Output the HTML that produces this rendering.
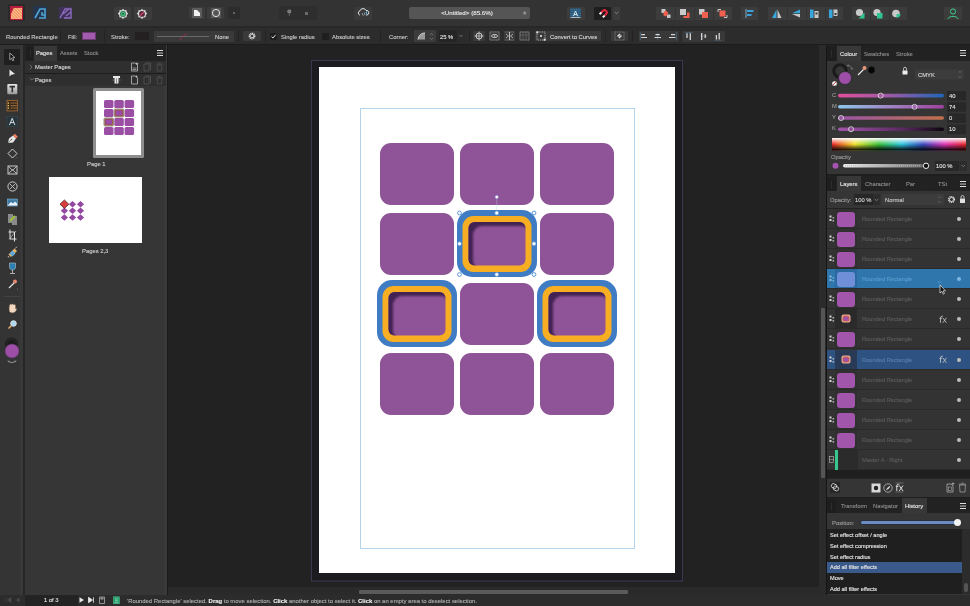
<!DOCTYPE html>
<html><head><meta charset="utf-8">
<style>
*{box-sizing:border-box;margin:0;padding:0}
html,body{width:970px;height:606px;overflow:hidden;background:#202020;font-family:"Liberation Sans",sans-serif;color:#ddd;-webkit-font-smoothing:antialiased}
div,span,svg{position:absolute}
.t{font-size:6px;white-space:nowrap;color:#cfcfcf;line-height:8px;will-change:transform;-webkit-text-stroke:0.12px currentColor}
.btn{background:#3a3a3a;border-radius:1px}
.sep{width:1px;background:#232323}
</style></head><body>
<!-- TOP TOOLBAR -->
<div style="left:0;top:0;width:970px;height:26px;background:#333333"></div>
<div style="left:0;top:26px;width:970px;height:2px;background:#282828"></div>
<!-- TOPITEMS -->
<div style="left:8px;top:4px;width:17px;height:17px;background:#2a2a2a"></div>
<svg style="left:10px;top:5.5px" width="13" height="14" viewBox="0 0 13 14"><defs><clipPath id="pubc"><path d="M3.8 2 H12 V13 H1 V8.3 Z"/></clipPath></defs><rect width="13" height="14" fill="#b81c3c"/><path d="M3.8 2 H12 V13 H1 V8.3 Z" fill="#ef7a45"/><g clip-path="url(#pubc)" stroke="#ffc090" stroke-width="1.4"><path d="M-12 0 L2 14 M-9 0 L5 14 M-6 0 L8 14 M-3 0 L11 14 M0 0 L14 14 M3 0 L17 14 M6 0 L20 14 M9 0 L23 14"/></g></svg>
<svg style="left:33px;top:6px" width="14" height="13" viewBox="0 0 14 13"><rect width="14" height="13" fill="#24354d"/><path d="M2 12 L7 3 H12 V12 H6 M9 6 v3 h3" fill="none" stroke="#4fa6d4" stroke-width="1.6"/></svg>
<svg style="left:59px;top:7px" width="13" height="12" viewBox="0 0 13 12"><rect width="13" height="12" fill="#3f3159"/><path d="M1 11 L6 2 H12 V11 H5 M4 7 L9 3 M7 9 L12 5" fill="none" stroke="#8e6dbf" stroke-width="1.3"/></svg>
<div class="btn" style="left:114px;top:7px;width:17px;height:13px;background:#3c3c3c"></div>
<div class="btn" style="left:134px;top:7px;width:18px;height:13px;background:#3c3c3c"></div>
<svg style="left:117px;top:8px" width="12" height="12" viewBox="0 0 12 12"><path d="M6 0.8 L7.3 2.2 L9.4 1.9 L9.7 4 L11.2 5.5 L9.8 7 L9.6 9.2 L7.5 9.4 L6 10.9 L4.5 9.4 L2.4 9.2 L2.2 7 L0.8 5.5 L2.3 4 L2.6 1.9 L4.7 2.2 Z" fill="#d9d9d9"/><circle cx="6" cy="5.9" r="2.9" fill="#1e6a40"/><circle cx="6" cy="5.9" r="2.2" fill="#4cc080"/><path d="M4.6 5.3 L7.4 5.3 L6 7.1Z" fill="#0d4d2a"/></svg>
<svg style="left:136px;top:8px" width="12" height="12" viewBox="0 0 12 12"><path d="M6 0.8 L7.3 2.2 L9.4 1.9 L9.7 4 L11.2 5.5 L9.8 7 L9.6 9.2 L7.5 9.4 L6 10.9 L4.5 9.4 L2.4 9.2 L2.2 7 L0.8 5.5 L2.3 4 L2.6 1.9 L4.7 2.2 Z" fill="#d9d9d9"/><circle cx="6" cy="5.9" r="2.9" fill="#4a2a3a"/><path d="M4.2 7.6 L7.8 4.2" stroke="#d8406a" stroke-width="1.4"/></svg>
<div class="btn" style="left:189px;top:7px;width:16px;height:12px;background:#3c3c3c"></div>
<div style="left:192px;top:8px;width:10px;height:10px;background:#5c5c5c"></div>
<svg style="left:193px;top:9px" width="8" height="8" viewBox="0 0 8 8"><path d="M1 1 H4 L7 4 V7 H1 Z" fill="#f2f2f2"/></svg>
<div class="btn" style="left:207px;top:7px;width:17px;height:12px;background:#3c3c3c"></div>
<div style="left:211px;top:8px;width:10px;height:10px;background:#555"></div>
<svg style="left:211px;top:8px" width="10" height="10" viewBox="0 0 10 10"><circle cx="5" cy="5" r="3.6" fill="none" stroke="#e6e6e6" stroke-width="1"/></svg>
<div class="btn" style="left:228px;top:7px;width:12px;height:12px;background:#2c2c2c"></div>
<div style="left:233px;top:12px;width:2px;height:2px;background:#666"></div>
<div class="btn" style="left:279px;top:6px;width:38px;height:14px;background:#2e2e2e"></div>
<svg style="left:286px;top:8px" width="7" height="9" viewBox="0 0 7 9"><circle cx="3.3" cy="3.5" r="2" fill="#8a8a8a"/><circle cx="3.3" cy="3.5" r="1" fill="#6a6a6a"/><path d="M3.3 5.5 V8" stroke="#7a7a7a" stroke-width="0.7"/></svg>
<div style="left:305px;top:12px;width:3px;height:3px;background:#6a6a6a"></div>
<div class="btn" style="left:354px;top:7px;width:18px;height:13px;background:#3a3a3a"></div>
<svg style="left:357px;top:8px" width="13" height="9" viewBox="0 0 13 9"><path d="M3 7 H2.8 A2.2 2.2 0 0 1 3 2.8 A3.2 3.2 0 0 1 9 2.5 A2.3 2.3 0 0 1 10 7 H9" fill="none" stroke="#dfe6ea" stroke-width="1"/><path d="M5 5 L6.3 7.8 M7.5 4.5 L7.8 7" stroke="#cfd8dc" stroke-width="0.6"/><path d="M9.5 3.5 V6.5" stroke="#5aa6d6" stroke-width="1.2"/></svg>
<div style="left:409px;top:7px;width:121px;height:12px;background:#555555;border-radius:2px"></div>
<div class="t" style="left:409px;top:8.5px;width:116px;text-align:center;color:#e8e8e8;font-size:6.2px">&lt;Untitled&gt; (85.6%)</div>
<div class="t" style="left:522px;top:8.5px;color:#9a9a9a;font-size:6px;-webkit-text-stroke:0">★</div>
<div class="btn" style="left:567px;top:7px;width:18px;height:13px;background:#3c3c3c"></div>
<svg style="left:570px;top:8px" width="11" height="11" viewBox="0 0 11 11"><rect x="0" y="0.5" width="11" height="9" fill="#26506f"/><path d="M0.5 1.2 H10.5 M0.5 3.2 H10.5 M0.5 5.5 H10.5 M0.5 7.6 H10.5" stroke="#5fa8d8" stroke-width="0.6" stroke-dasharray="1.2 0.6"/><path d="M3.3 8.3 L5.5 3 L7.7 8.3 M4.1 6.5 H6.9" fill="none" stroke="#cfe3ea" stroke-width="1"/><path d="M0.5 9.5 H10.5" stroke="#e8f0f4" stroke-width="0.7"/></svg>
<div class="btn" style="left:594px;top:7px;width:17px;height:13px;background:#1e1e1e"></div>
<svg style="left:597px;top:8px" width="11" height="11" viewBox="0 0 11 11"><path d="M3.6 5.2 L6.2 2.6 A2.3 2.3 0 0 1 9.4 5.8 L6.8 8.4" fill="none" stroke="#e02a40" stroke-width="2"/><path d="M2.6 6.2 L4.4 4.4 M5.8 9.4 L7.6 7.6" stroke="#f2f2f2" stroke-width="2"/></svg>
<div class="btn" style="left:613px;top:7px;width:7px;height:13px;background:#3c3c3c"></div>
<svg style="left:614px;top:11px" width="5" height="4" viewBox="0 0 5 4"><path d="M0.7 0.8 L2.5 2.8 L4.3 0.8" fill="none" stroke="#aaa" stroke-width="0.6"/></svg>
<div style="left:656px;top:7px;width:76px;height:13px;background:#3c3c3c"></div>
<div style="left:675px;top:7px;width:1px;height:13px;background:#333333"></div>
<div style="left:694px;top:7px;width:1px;height:13px;background:#333333"></div>
<div style="left:713px;top:7px;width:1px;height:13px;background:#333333"></div>
<svg style="left:656px;top:7px" width="76" height="13" viewBox="0 0 76 13">
<rect x="5.5" y="2" width="4" height="4" fill="#c9c9c9"/><rect x="11" y="7.5" width="3.5" height="3.5" fill="#c9c9c9"/><path d="M7.5 5 L10 3.5 L12.5 6 L10 9.5 L7.5 8.5 Z" fill="#f0604e"/>
<rect x="24" y="2" width="6" height="6" fill="#c9c9c9"/><path d="M31 5.5 H33.5 V11 H27.5 V9 H31 Z" fill="#f0604e"/>
<rect x="43" y="2" width="5.5" height="5.5" fill="#c9c9c9"/><rect x="46" y="5" width="6" height="6" fill="#f0604e"/>
<rect x="63.5" y="3.5" width="6" height="6" fill="#f0604e"/><path d="M62 5 V2.5 H65" fill="none" stroke="#c9c9c9" stroke-width="1"/><path d="M71 8 V10.5 H68" fill="none" stroke="#c9c9c9" stroke-width="1"/>
</svg>
<div style="left:741px;top:7px;width:17px;height:13px;background:#3c3c3c"></div>
<svg style="left:741px;top:7px" width="17" height="13" viewBox="0 0 17 13"><path d="M5 2 V11" stroke="#8ab4cf" stroke-width="0.9"/><rect x="6" y="3" width="6.5" height="2" fill="#3aa0d8"/><rect x="6" y="7" width="4.5" height="2" fill="#3aa0d8"/></svg>
<div style="left:768px;top:7px;width:75px;height:13px;background:#3c3c3c"></div>
<div style="left:787px;top:7px;width:1px;height:13px;background:#333333"></div>
<div style="left:806px;top:7px;width:1px;height:13px;background:#333333"></div>
<div style="left:825px;top:7px;width:1px;height:13px;background:#333333"></div>
<svg style="left:768px;top:7px" width="75" height="13" viewBox="0 0 75 13">
<path d="M8.5 2.5 V11 H4 Z" fill="#37a6dc"/><path d="M9.5 2.5 V11 H13.5 Z" fill="#c9c9c9"/>
<path d="M24 6.2 L32 2.6 V6.2 Z" fill="#37a6dc"/><path d="M24 6.9 L32 10.6 V6.9 Z" fill="#c9c9c9"/>
<rect x="42" y="2.5" width="3.5" height="8.5" fill="#37a6dc"/><path d="M46.5 4 H50.5 V11 H46.5 Z" fill="#c9c9c9"/><rect x="47.5" y="5.5" width="2" height="2" fill="#383838"/>
<rect x="61" y="2.5" width="3.5" height="8.5" fill="#37a6dc"/><path d="M65.5 2.5 H69.5 V9 H65.5 Z" fill="#c9c9c9"/><rect x="66.5" y="6" width="2" height="2" fill="#383838"/>
</svg>
<div style="left:852px;top:7px;width:55px;height:13px;background:#3c3c3c"></div>
<div style="left:870px;top:7px;width:1px;height:13px;background:#333333"></div>
<div style="left:889px;top:7px;width:1px;height:13px;background:#333333"></div>
<svg style="left:852px;top:7px" width="55" height="13" viewBox="0 0 55 13">
<circle cx="7.5" cy="5.5" r="3.6" fill="#c9c9c9"/><path d="M12.5 5.5 V11.5 H6.5 Z" fill="#31c48d"/>
<circle cx="25" cy="5.5" r="3.6" fill="#c9c9c9"/><rect x="25" y="6" width="5.5" height="5.5" fill="#31c48d"/>
<circle cx="44" cy="6.5" r="3.8" fill="#c9c9c9"/><path d="M44.5 7 H48.5 A4 4 0 0 1 44.5 10.8 Z" fill="#31c48d"/>
</svg>
<div style="left:944px;top:7px;width:18px;height:13px;background:#3c3c3c"></div>
<svg style="left:944px;top:7px" width="18" height="13" viewBox="0 0 18 13"><circle cx="9" cy="4.5" r="2.6" fill="none" stroke="#3ccf8e" stroke-width="1"/><path d="M4 12 C4.5 8.5 13.5 8.5 14 12" fill="none" stroke="#3ccf8e" stroke-width="1"/></svg>
<!-- /TOPITEMS -->

<!-- CONTEXT BAR -->
<div id="ctx" style="left:0;top:28px;width:970px;height:16px;background:#2c2c2c"></div>
<div style="left:0;top:44px;width:970px;height:1px;background:#1c1c1c"></div>
<!-- CTXITEMS -->
<div class="t" style="left:6px;top:33px;color:#c8c8c8;font-size:5.85px">Rounded Rectangle</div>
<div class="sep" style="left:60px;top:30px;height:12px"></div>
<div class="t" style="left:68px;top:33px;color:#c8c8c8;font-size:5.85px">Fill:</div>
<div style="left:82px;top:32px;width:14px;height:8px;background:#a35bb0;border:0.5px solid #6a3a70"></div>
<div class="sep" style="left:104px;top:30px;height:12px"></div>
<div class="t" style="left:111px;top:33px;color:#c8c8c8;font-size:5.85px">Stroke:</div>
<div style="left:135px;top:32px;width:14px;height:8px;background:#242022"></div>
<div style="left:154px;top:31px;width:80px;height:11px;background:#3a3a3a;border-radius:1px"></div>
<div style="left:157px;top:36px;width:52px;height:1px;background:#6a6a6a"></div>
<svg style="left:176px;top:31px" width="14" height="11" viewBox="0 0 14 11"><path d="M3.5 9 L10.5 2" stroke="#a8304a" stroke-width="0.8"/></svg>
<div class="t" style="left:215px;top:33px;color:#d0d0d0;font-size:5.85px">None</div>
<div class="sep" style="left:238px;top:30px;height:12px"></div>
<div style="left:243px;top:31px;width:18px;height:10px;background:#3a3a3a;border-radius:1px"></div>
<svg style="left:248px;top:32px" width="8" height="8" viewBox="0 0 8 8"><circle cx="4" cy="4" r="2.6" fill="none" stroke="#d8d8d8" stroke-width="1.6" stroke-dasharray="1.1 0.6"/><circle cx="4" cy="4" r="1.8" fill="none" stroke="#d8d8d8" stroke-width="0.8"/></svg>
<div class="sep" style="left:265px;top:30px;height:12px"></div>
<div style="left:270px;top:33px;width:7px;height:7px;background:#1e1e1e;border-radius:1px"></div>
<svg style="left:270px;top:33px" width="7" height="7" viewBox="0 0 7 7"><path d="M1.5 3.6 L3 5 L5.6 1.8" fill="none" stroke="#eee" stroke-width="0.9"/></svg>
<div class="t" style="left:281px;top:33px;color:#c8c8c8;font-size:5.85px">Single radius</div>
<div style="left:322px;top:33px;width:7px;height:7px;background:#1e1e1e;border-radius:1px"></div>
<div class="t" style="left:332px;top:33px;color:#c8c8c8;font-size:5.85px">Absolute sizes</div>
<div class="sep" style="left:380px;top:30px;height:12px"></div>
<div class="t" style="left:389px;top:33px;color:#c8c8c8;font-size:5.85px">Corner:</div>
<div style="left:414px;top:30px;width:22px;height:12px;background:#3c3c3c;border-radius:1px"></div>
<svg style="left:417px;top:32px" width="10" height="8" viewBox="0 0 10 8"><path d="M1 7.5 C1.5 3.5 4 1 8 1 V7.5 Z" fill="#9a9a9a"/><path d="M1 7.5 C1.5 3.5 4 1 8 1" fill="none" stroke="#dcdcdc" stroke-width="0.9"/></svg>
<svg style="left:429px;top:32px" width="5" height="9" viewBox="0 0 5 9"><path d="M1 3 L2.5 1.5 L4 3 M1 6 L2.5 7.5 L4 6" fill="none" stroke="#8a8a8a" stroke-width="0.6"/></svg>
<div style="left:439px;top:30px;width:18px;height:12px;background:#252525"></div>
<div class="t" style="left:440px;top:33px;color:#e0e0e0;font-size:5.85px">25 %</div>
<div style="left:457px;top:30px;width:7px;height:12px;background:#2b2b2b"></div>
<svg style="left:459px;top:34px" width="4" height="4" viewBox="0 0 4 4"><path d="M0.5 1 L2 2.8 L3.5 1" fill="none" stroke="#999" stroke-width="0.6"/></svg>
<div class="sep" style="left:469px;top:30px;height:12px"></div>
<div style="left:473px;top:31px;width:12px;height:10px;background:#3a3a3a;border-radius:1px"></div>
<svg style="left:474px;top:31px" width="10" height="10" viewBox="0 0 10 10"><circle cx="5" cy="5" r="3" fill="none" stroke="#ddd" stroke-width="0.9"/><path d="M5 0.5 V9.5 M0.5 5 H9.5" stroke="#ddd" stroke-width="0.7"/></svg>
<div style="left:489px;top:31px;width:11px;height:10px;background:#3a3a3a;border-radius:1px"></div>
<svg style="left:489px;top:31px" width="11" height="10" viewBox="0 0 11 10"><rect x="1" y="1" width="9" height="8" fill="none" stroke="#bbb" stroke-width="0.6" stroke-dasharray="1 0.6"/><ellipse cx="5.5" cy="5" rx="3" ry="1.6" fill="none" stroke="#e6e6e6" stroke-width="0.8"/><circle cx="5.5" cy="5" r="0.8" fill="#e6e6e6"/></svg>
<div style="left:504px;top:31px;width:11px;height:10px;background:#3a3a3a;border-radius:1px"></div>
<svg style="left:504px;top:31px" width="11" height="10" viewBox="0 0 11 10"><path d="M1 1 H10 M1 9 H10" stroke="#aaa" stroke-width="0.6" stroke-dasharray="1 0.6"/><path d="M5.5 1 V9" stroke="#ddd" stroke-width="0.8"/><path d="M2 3 L4.5 5 L2 7 M9 3 L6.5 5 L9 7" fill="none" stroke="#ddd" stroke-width="0.7"/></svg>
<div style="left:519px;top:31px;width:11px;height:10px;background:#3a3a3a;border-radius:1px"></div>
<svg style="left:519px;top:31px" width="11" height="10" viewBox="0 0 11 10"><rect x="1" y="1" width="9" height="8" fill="none" stroke="#aaa" stroke-width="0.7" stroke-dasharray="1 0.7"/><path d="M1 4 H10 M4 1 V9 M7 1 V9" stroke="#999" stroke-width="0.5" stroke-dasharray="1 0.7"/></svg>
<div style="left:535px;top:31px;width:66px;height:10px;background:#3a3a3a;border-radius:1px"></div>
<svg style="left:536px;top:31px" width="10" height="10" viewBox="0 0 10 10"><path d="M1 1 H9 V9 H1 Z" fill="none" stroke="#ccc" stroke-width="0.7" stroke-dasharray="1.4 0.8"/><circle cx="5" cy="5" r="1" fill="#eee"/><rect x="0.3" y="0.3" width="2" height="2" fill="#ddd"/><rect x="7.7" y="7.7" width="2" height="2" fill="#ddd"/></svg>
<div class="t" style="left:550px;top:33px;color:#d8d8d8;font-size:5.85px">Convert to Curves</div>
<div class="sep" style="left:605px;top:30px;height:12px"></div>
<div style="left:611px;top:31px;width:17px;height:10px;background:#3a3a3a;border-radius:1px"></div>
<svg style="left:614px;top:31px" width="11" height="10" viewBox="0 0 11 10"><path d="M1 1 H10 V9 H1 Z" fill="none" stroke="#aaa" stroke-width="0.6" stroke-dasharray="1 0.8"/><path d="M3 5 L5.5 2.5 L8 5 L5.5 7.5 Z" fill="#ddd"/><path d="M3 7 L8 3" stroke="#3a3a3a" stroke-width="0.7"/></svg>
<div class="sep" style="left:632px;top:30px;height:12px"></div>
<div style="left:639px;top:31px;width:40px;height:11px;background:#383838"></div>
<div style="left:682px;top:31px;width:43px;height:11px;background:#383838"></div>
<svg style="left:636px;top:29px" width="92" height="15" viewBox="636 29 92 15">
<path d="M640.3 32 V40" stroke="#5a7f9c" stroke-width="0.6"/><path d="M641.2 34.7 H645 M641.2 37.5 H647" stroke="#d6d6d6" stroke-width="1.2"/>
<path d="M657.6 32.5 V40" stroke="#5a7f9c" stroke-width="0.5"/><path d="M655.5 34.7 H659.7 M654.5 37.5 H661" stroke="#d6d6d6" stroke-width="1.2"/>
<path d="M676.3 32 V40" stroke="#5a7f9c" stroke-width="0.6"/><path d="M671 34.7 H675 M669 37.5 H675.4" stroke="#d6d6d6" stroke-width="1.2"/>
<path d="M685 32.5 H692.5" stroke="#5a7f9c" stroke-width="0.5"/><path d="M687 33.3 V38 M690.3 33.3 V40" stroke="#d6d6d6" stroke-width="1.3"/>
<path d="M700 36 H707.5" stroke="#5a7f9c" stroke-width="0.5"/><path d="M701.7 33 V40 M705.2 34.2 V38" stroke="#d6d6d6" stroke-width="1.3"/>
<path d="M714.5 40.3 H721.5" stroke="#5a7f9c" stroke-width="0.5"/><path d="M716.4 35 V39.5 M719.2 33 V39.5" stroke="#d6d6d6" stroke-width="1.3"/>
</svg>
<!-- /CTXITEMS -->

<!-- LEFT TOOLS -->
<div id="tools" style="left:0;top:45px;width:23px;height:550px;background:#343434"></div>
<div style="left:20px;top:45px;width:3px;height:550px;background:#383838"></div><div style="left:23px;top:45px;width:2px;height:550px;background:#262626"></div><div style="left:25px;top:45px;width:2px;height:550px;background:#3a3a3a"></div>
<!-- TOOLITEMS -->
<div style="left:4px;top:49px;width:16px;height:16px;background:#1f1f1f;border-radius:1px"></div>
<svg style="left:0;top:45px" width="23" height="330" viewBox="0 45 23 330">
<path d="M9.8 53 V59.8 L11.5 58.2 L12.7 60.8 L13.8 60.2 L12.7 57.6 H15 Z" fill="#101010" stroke="#9c9c9c" stroke-width="1"/>
<path d="M9.5 69.5 V76.5 L11.3 74.8 L15 74 Z" fill="#e8e8e8"/>
<defs><linearGradient id="tg" x1="0" x2="0" y1="0" y2="1"><stop offset="0" stop-color="#e6e6e6"/><stop offset="1" stop-color="#9a9a9a"/></linearGradient></defs><rect x="7.3" y="84" width="10" height="10.3" rx="1" fill="url(#tg)"/><path d="M9.6 86.6 H15 M12.3 86.6 V92.3" stroke="#2e2e2e" stroke-width="1.6"/>
<rect x="7" y="100.3" width="10.3" height="10.6" fill="#3a2a1c" stroke="#b8773a" stroke-width="0.7"/><path d="M10.6 103.2 H16.8 M10.6 105.7 H16.8 M10.6 108.2 H16.8" stroke="#d89a50" stroke-width="1.1"/><path d="M8.4 102.5 V103.8 M8.4 105 V106.3 M8.4 107.5 V108.8" stroke="#f0d060" stroke-width="1.2"/><path d="M10.5 103.6 H16.8 M10.5 106.1 H16.8 M10.5 108.6 H16.8" stroke="#2a1f18" stroke-width="0.6"/>
<rect x="7" y="116.6" width="10.3" height="9.8" fill="#26343c" stroke="#46606e" stroke-width="0.5" stroke-dasharray="1 0.5"/><path d="M9.5 125 L12.2 118.3 L14.9 125 M10.6 122.6 H13.8" fill="none" stroke="#d8dde0" stroke-width="1"/>
<path d="M8 143 L9 138.5 L13 135.5 L16 138.5 L13 142.5 Z" fill="#e8e8e8"/><path d="M8 143 L11.3 139.7" stroke="#555" stroke-width="0.6"/><circle cx="11.5" cy="139.5" r="0.7" fill="#555"/><path d="M13 135.5 L14.8 133.7 L17.8 136.7 L16 138.5 Z" fill="#f0805a"/>
<path d="M12.5 149 L17 153.5 L12.5 158 L8 153.5 Z" fill="none" stroke="#e0e0e0" stroke-width="0.9"/><path d="M16 158.5 L17.5 157" stroke="#777" stroke-width="0.6"/>
<rect x="8" y="166" width="9" height="8" fill="none" stroke="#d8d8d8" stroke-width="0.9"/><path d="M8.5 166.5 L12.5 170.3 L16.5 166.5 M8.5 173.5 L12.5 169.7 L16.5 173.5" fill="none" stroke="#d8d8d8" stroke-width="0.8"/>
<circle cx="12.5" cy="186.5" r="4.6" fill="none" stroke="#d8d8d8" stroke-width="0.9"/><path d="M10 184 L15 189 M15 184 L10 189" stroke="#d8d8d8" stroke-width="0.8"/>
<rect x="7.5" y="199" width="10" height="7" fill="#3f7ca6" stroke="#8fc3e6" stroke-width="0.5"/><path d="M8 205 L11 202 L13 203.5 L15 201.5 L17 203.5 V205.5 H8 Z" fill="#e8f2f8"/>
<rect x="8" y="214" width="5" height="9" fill="#8a8a8a"/><rect x="12" y="216" width="5" height="9" fill="#8a8a8a"/><path d="M10 221 L15 216" stroke="#9bc33a" stroke-width="2"/>
<path d="M10 229.5 V239 H16.5 M8.5 232 H14.5 V241.5" fill="none" stroke="#e0e0e0" stroke-width="1"/><path d="M9 239.5 L16 231" stroke="#e0e0e0" stroke-width="0.6"/>
<path d="M8.5 254.5 L14.5 248.5 L17 251 L11 257 Z" fill="#e3b36a"/><path d="M9.5 253.5 L12.5 250.5 L15.5 253.5 L12.5 256.5Z" fill="#5fa8d8"/><path d="M15.2 248.5 L17 246.7" stroke="#ddd" stroke-width="0.8"/><path d="M8 256 L9 257.5" stroke="#eee" stroke-width="0.8"/>
<path d="M9.5 263 H15.5 V267 C15.5 269 14 270 12.5 270 C11 270 9.5 269 9.5 267 Z" fill="#2b7fb5" stroke="#cfcfcf" stroke-width="0.5"/><path d="M12.5 270 V273 M10 273.5 H15" stroke="#cfcfcf" stroke-width="0.8"/>
<path d="M9 288 L14.5 282.5" stroke="#e0e0e0" stroke-width="1.2"/><circle cx="15" cy="281.5" r="2" fill="#e88a70"/><circle cx="17.5" cy="289" r="0.5" fill="#888"/>
<path d="M4 296.5 H20" stroke="#4a4a4a" stroke-width="0.7"/>
<path d="M9.5 311.5 C9 309 9 306 10 304.5 C10.5 303.5 11.5 304 11.5 305 C11.5 303.5 13.5 303.5 13.5 305 C14 304 15.5 304.3 15.5 305.5 V309 C16 308 17 308.5 16.5 309.5 C16 311 15 312.8 12.5 312.8 C11 312.8 10 312.5 9.5 311.5 Z" fill="#f2d8c0" stroke="#8a6a50" stroke-width="0.4"/>
<circle cx="13.5" cy="323.5" r="2.8" fill="#a8d8f0" stroke="#e8e8e8" stroke-width="0.9"/><path d="M11.3 325.7 L8.5 328.5" stroke="#e8b070" stroke-width="1.5"/>
<circle cx="11.5" cy="344" r="6.5" fill="#1c1c1c"/><circle cx="11.5" cy="344" r="5" fill="none" stroke="#2a2a2a" stroke-width="1.3"/>
<circle cx="12" cy="351" r="7" fill="#9d4fa8"/><circle cx="12" cy="351" r="7" fill="none" stroke="#5a2d63" stroke-width="0.5"/>
<path d="M8.5 361 C10 363 14 363 15.5 361" fill="none" stroke="#cfcfcf" stroke-width="0.6"/><path d="M8 360.5 L8.5 361.8 L9.6 361.2 M16 360.5 L15.5 361.8 L14.4 361.2" fill="none" stroke="#cfcfcf" stroke-width="0.5"/>
</svg>
<!-- /TOOLITEMS -->

<!-- PAGES PANEL -->
<div id="pages" style="left:25px;top:45px;width:141px;height:550px;background:#363636"></div>
<div style="left:164px;top:45px;width:3px;height:550px;background:#3a3a3a"></div><div style="left:167px;top:45px;width:1px;height:550px;background:#1b1b1b"></div>
<!-- PAGESITEMS -->
<div style="left:25px;top:45px;width:141px;height:16px;background:#222222"></div>
<div style="left:27px;top:47px;width:6px;height:13px;background:#1e1e1e"></div>
<div style="left:30px;top:50px;width:1px;height:7px;background:#2e2e2e"></div>
<div style="left:34px;top:46px;width:23px;height:15px;background:#383838"></div>
<div class="t" style="left:36px;top:49.2px;color:#e6e6e6;font-size:5.8px">Pages</div>
<div class="t" style="left:60px;top:49.2px;color:#8e8e8e;font-size:5.8px">Assets</div>
<div style="left:81px;top:47px;width:1px;height:13px;background:#242424"></div>
<div class="t" style="left:84px;top:49.2px;color:#8e8e8e;font-size:5.8px">Stock</div>
<svg style="left:157px;top:49px" width="7" height="8" viewBox="0 0 7 8"><rect x="0" y="1" width="6" height="1" fill="#e0e0e0"/><rect x="0" y="3.3" width="6" height="1.6" fill="#8a8a8a"/><rect x="0" y="6" width="6" height="1" fill="#e0e0e0"/></svg>
<div style="left:25px;top:61px;width:141px;height:12px;background:#2f2f2f"></div>
<div style="left:25px;top:73px;width:141px;height:1px;background:#1c1c1c"></div>
<svg style="left:29px;top:64px" width="4" height="6" viewBox="0 0 4 6"><path d="M1 0.8 L3 3 L1 5.2" fill="none" stroke="#888" stroke-width="0.7"/></svg>
<div class="t" style="left:35px;top:63px;color:#d8d8d8;font-size:5.8px">Master Pages</div>
<svg style="left:130px;top:62px" width="36" height="10" viewBox="0 0 36 10"><path d="M1.5 1 H5.5 L7.5 3 V9 H1.5 Z" fill="none" stroke="#d0d0d0" stroke-width="0.7"/><path d="M2.5 6 H6.5 M2.5 7.5 H6.5" stroke="#d0d0d0" stroke-width="0.6"/><path d="M7 0.5 V3 M5.7 1.7 H8.3" stroke="#eee" stroke-width="0.6"/>
<path d="M14 2 H19 V9 H14 Z M15.5 1 H20.5 V8" fill="none" stroke="#5a5a5a" stroke-width="0.7"/>
<path d="M27 3 H32 L31.5 9 H27.5 Z M26.5 2 H32.5 M28.5 1 H30.5" fill="none" stroke="#555" stroke-width="0.7"/></svg>
<div style="left:25px;top:74px;width:141px;height:12px;background:#2f2f2f"></div>
<svg style="left:29px;top:77px" width="6" height="5" viewBox="0 0 6 5"><path d="M0.8 1 L3 3.2 L5.2 1" fill="none" stroke="#888" stroke-width="0.7"/></svg>
<div class="t" style="left:35px;top:76px;color:#d8d8d8;font-size:5.8px">Pages</div>
<svg style="left:112px;top:75px" width="9" height="10" viewBox="0 0 9 10"><rect x="1" y="1" width="7" height="2" fill="#e8e8e8"/><rect x="2.5" y="3" width="4" height="5.5" fill="#e8e8e8"/><path d="M4.5 3.5 V8" stroke="#444" stroke-width="0.6"/><path d="M0.5 5 H2 M7 5 H8.5" stroke="#aaa" stroke-width="0.5"/></svg>
<svg style="left:130px;top:75px" width="36" height="10" viewBox="0 0 36 10"><path d="M1.5 1 H5.5 L7.5 3 V9 H1.5 Z" fill="none" stroke="#d0d0d0" stroke-width="0.7"/><path d="M6.5 0.5 V2.5 M5.5 1.5 H7.5" stroke="#eee" stroke-width="0.5"/>
<path d="M14 2 H19 V9 H14 Z M15.5 1 H20.5 V8" fill="none" stroke="#5a5a5a" stroke-width="0.7"/>
<path d="M27 3 H32 L31.5 9 H27.5 Z M26.5 2 H32.5 M28.5 1 H30.5" fill="none" stroke="#555" stroke-width="0.7"/></svg>
<div style="left:93px;top:88px;width:51px;height:70px;background:#8e8e8e;border-radius:1.5px"></div>
<div style="left:96px;top:91px;width:45px;height:64px;background:#ffffff"></div>
<svg style="left:96px;top:91px" width="45" height="64" viewBox="0 0 45 64">
<g fill="#9a4fa5">
<rect x="8" y="9" width="9.5" height="8" rx="1.6"/><rect x="18.3" y="9" width="9.5" height="8" rx="1.6"/><rect x="28.6" y="9" width="9.5" height="8" rx="1.6"/>
<rect x="8" y="18" width="9.5" height="8" rx="1.6"/><rect x="28.6" y="18" width="9.5" height="8" rx="1.6"/>
<rect x="18.3" y="27" width="9.5" height="8" rx="1.6"/>
<rect x="8" y="36" width="9.5" height="8" rx="1.6"/><rect x="18.3" y="36" width="9.5" height="8" rx="1.6"/><rect x="28.6" y="36" width="9.5" height="8" rx="1.6"/>
</g>
<rect x="17.8" y="17.5" width="10.5" height="9" rx="2" fill="#9a8878"/><rect x="19.2" y="19" width="7.7" height="6" rx="1.2" fill="#a04838"/><rect x="19.8" y="19.6" width="6.5" height="4.8" rx="1" fill="#9a4aa8"/>
<rect x="7.5" y="26.5" width="10.5" height="9" rx="2" fill="#9a8878"/><rect x="8.9" y="28" width="7.7" height="6" rx="1.2" fill="#a04838"/><rect x="9.5" y="28.6" width="6.5" height="4.8" rx="1" fill="#9a4aa8"/>
<rect x="28.6" y="27" width="9.5" height="8" rx="1.6" fill="#9a4fa5"/>
</svg>
<div class="t" style="left:87px;top:160px;color:#d0d0d0;font-size:5.85px">Page 1</div>
<div style="left:49px;top:177px;width:93px;height:66px;background:#ffffff"></div>
<svg style="left:49px;top:177px" width="93" height="66" viewBox="0 0 93 66"><g fill="#9448a2"><path d="M19.9 27.2 L23.5 23.9 L27.1 27.2 L23.5 30.5Z"/><path d="M27.9 27.2 L31.5 23.9 L35.1 27.2 L31.5 30.5Z"/><path d="M11.8 33.8 L15.4 30.499999999999996 L19.0 33.8 L15.4 37.099999999999994Z"/><path d="M19.9 33.8 L23.5 30.499999999999996 L27.1 33.8 L23.5 37.099999999999994Z"/><path d="M27.9 33.8 L31.5 30.499999999999996 L35.1 33.8 L31.5 37.099999999999994Z"/><path d="M11.8 40.5 L15.4 37.2 L19.0 40.5 L15.4 43.8Z"/><path d="M19.9 40.5 L23.5 37.2 L27.1 40.5 L23.5 43.8Z"/><path d="M27.9 40.5 L31.5 37.2 L35.1 40.5 L31.5 43.8Z"/></g><path d="M11 27.2 L15.4 23 L19.8 27.2 L15.4 31.4Z" fill="#d84040" stroke="#4a2a20" stroke-width="0.8"/></svg>
<div class="t" style="left:82px;top:247px;color:#d0d0d0;font-size:5.85px">Pages 2,3</div>
<!-- /PAGESITEMS -->

<!-- CANVAS -->
<div id="canvas" style="left:168px;top:45px;width:653px;height:550px;background:#222222"></div>
<!-- CANVASSVG -->
<svg style="left:0;top:0" width="970" height="606" viewBox="0 0 970 606">
<defs><filter id="ish" x="-20%" y="-20%" width="140%" height="140%"><feGaussianBlur stdDeviation="0.9"/></filter><clipPath id="c0"><rect x="468.5" y="222" width="57" height="43.5" rx="6"/></clipPath><clipPath id="c1"><rect x="388.5" y="292" width="57" height="43.5" rx="6"/></clipPath><clipPath id="c2"><rect x="548.5" y="292" width="57" height="43.5" rx="6"/></clipPath></defs>
<rect x="311.5" y="60.5" width="371" height="520.5" fill="#1c1c20" stroke="#3a3850" stroke-width="1"/>
<rect x="319" y="67" width="356" height="506" fill="#ffffff"/>
<rect x="360.5" y="108.5" width="274" height="440" fill="none" stroke="#b3d3ea" stroke-width="1"/>
<rect x="380" y="143" width="74" height="62" rx="11" fill="#8f5497"/>
<rect x="460" y="143" width="74" height="62" rx="11" fill="#8f5497"/>
<rect x="540" y="143" width="74" height="62" rx="11" fill="#8f5497"/>
<rect x="380" y="213" width="74" height="62" rx="11" fill="#8f5497"/>
<rect x="540" y="213" width="74" height="62" rx="11" fill="#8f5497"/>
<rect x="460" y="283" width="74" height="62" rx="11" fill="#8f5497"/>
<rect x="380" y="353" width="74" height="62" rx="11" fill="#8f5497"/>
<rect x="460" y="353" width="74" height="62" rx="11" fill="#8f5497"/>
<rect x="540" y="353" width="74" height="62" rx="11" fill="#8f5497"/>
<rect x="457" y="210" width="80" height="67" rx="15" fill="#3f7cc4"/>
<rect x="462.5" y="216" width="69" height="56" rx="11" fill="#f8ae22"/>
<rect x="468.5" y="222" width="57" height="43.5" rx="6" fill="#8f5497"/>
<g clip-path="url(#c0)"><path fill-rule="evenodd" fill="#432352" filter="url(#ish)" d="M458.5 212.0 h77 v63.5 h-77 Z M482.0 226.0 H521.0 A9 9 0 0 1 530.0 235.0 V260.5 A9 9 0 0 1 521.0 269.5 H482.0 A9 9 0 0 1 473.0 260.5 V235.0 A9 9 0 0 1 482.0 226.0 Z"/></g>
<rect x="377" y="280" width="80" height="67" rx="15" fill="#3f7cc4"/>
<rect x="382.5" y="286" width="69" height="56" rx="11" fill="#f8ae22"/>
<rect x="388.5" y="292" width="57" height="43.5" rx="6" fill="#8f5497"/>
<g clip-path="url(#c1)"><path fill-rule="evenodd" fill="#432352" filter="url(#ish)" d="M378.5 282.0 h77 v63.5 h-77 Z M402.0 296.0 H441.0 A9 9 0 0 1 450.0 305.0 V330.5 A9 9 0 0 1 441.0 339.5 H402.0 A9 9 0 0 1 393.0 330.5 V305.0 A9 9 0 0 1 402.0 296.0 Z"/></g>
<rect x="537" y="280" width="80" height="67" rx="15" fill="#3f7cc4"/>
<rect x="542.5" y="286" width="69" height="56" rx="11" fill="#f8ae22"/>
<rect x="548.5" y="292" width="57" height="43.5" rx="6" fill="#8f5497"/>
<g clip-path="url(#c2)"><path fill-rule="evenodd" fill="#432352" filter="url(#ish)" d="M538.5 282.0 h77 v63.5 h-77 Z M562.0 296.0 H601.0 A9 9 0 0 1 610.0 305.0 V330.5 A9 9 0 0 1 601.0 339.5 H562.0 A9 9 0 0 1 553.0 330.5 V305.0 A9 9 0 0 1 562.0 296.0 Z"/></g>
<line x1="496.75" y1="213" x2="496.75" y2="197" stroke="#b0cce8" stroke-width="0.6" opacity="0.6"/>
<circle cx="459.5" cy="213" r="1.9" fill="#ffffff" stroke="#4a8fd6" stroke-width="0.9"/>
<circle cx="534" cy="213" r="1.9" fill="#ffffff" stroke="#4a8fd6" stroke-width="0.9"/>
<circle cx="459.5" cy="274.5" r="1.9" fill="#ffffff" stroke="#4a8fd6" stroke-width="0.9"/>
<circle cx="534" cy="274.5" r="1.9" fill="#ffffff" stroke="#4a8fd6" stroke-width="0.9"/>
<circle cx="496.75" cy="213" r="2" fill="#ffffff" stroke="#4a8fd6" stroke-width="0.6"/>
<circle cx="459.5" cy="243.75" r="2" fill="#ffffff" stroke="#4a8fd6" stroke-width="0.6"/>
<circle cx="534" cy="243.75" r="2" fill="#ffffff" stroke="#4a8fd6" stroke-width="0.6"/>
<circle cx="496.75" cy="274.5" r="2" fill="#ffffff" stroke="#4a8fd6" stroke-width="0.6"/>
<circle cx="496.75" cy="197" r="1.7" fill="#ffffff" stroke="#6a6ad0" stroke-width="0.4"/>
</svg>
<!-- /CANVASSVG -->
<!-- RIGHT -->
<div id="right" style="left:821px;top:45px;width:149px;height:550px;background:#2b2b2b"></div>
<!-- RIGHTITEMS -->
<div style="left:819px;top:45px;width:7px;height:550px;background:#2b2b2b"></div>
<div style="left:821px;top:308px;width:4px;height:170px;background:#555555;border-radius:1px"></div>
<div style="left:826px;top:45px;width:1px;height:550px;background:#151515"></div>
<div style="left:827px;top:45px;width:143px;height:550px;background:#353535"></div>
<!-- colour tabs -->
<div style="left:827px;top:45px;width:143px;height:16px;background:#222222"></div>
<div style="left:827px;top:46px;width:9px;height:15px;background:#1e1e1e"></div>
<div style="left:831px;top:50px;width:1px;height:7px;background:#2e2e2e"></div>
<div style="left:837px;top:46px;width:24px;height:15px;background:#383838"></div>
<div class="t" style="left:840px;top:49.7px;color:#e6e6e6;font-size:5.8px">Colour</div>
<div class="t" style="left:864px;top:49.7px;color:#8e8e8e;font-size:5.8px">Swatches</div>
<div style="left:892px;top:47px;width:1px;height:13px;background:#242424"></div>
<div class="t" style="left:896px;top:49.7px;color:#8e8e8e;font-size:5.8px">Stroke</div>
<svg style="left:960px;top:49px" width="7" height="8" viewBox="0 0 7 8"><rect x="0" y="1" width="6" height="1" fill="#e0e0e0"/><rect x="0" y="3.3" width="6" height="1.6" fill="#8a8a8a"/><rect x="0" y="6" width="6" height="1" fill="#e0e0e0"/></svg>
<!-- colour content -->
<svg style="left:827px;top:61px" width="143" height="113" viewBox="827 61 143 113">
<defs>
<linearGradient id="gC" x1="0" x2="1"><stop offset="0" stop-color="#e0509a"/><stop offset="0.5" stop-color="#9a5aa8"/><stop offset="1" stop-color="#1f66b8"/></linearGradient>
<linearGradient id="gM" x1="0" x2="1"><stop offset="0" stop-color="#8ec8ea"/><stop offset="0.55" stop-color="#a07cc0"/><stop offset="1" stop-color="#a040a0"/></linearGradient>
<linearGradient id="gY" x1="0" x2="1"><stop offset="0" stop-color="#9a54a8"/><stop offset="1" stop-color="#c0704a"/></linearGradient>
<linearGradient id="gK" x1="0" x2="1"><stop offset="0" stop-color="#a055aa"/><stop offset="0.6" stop-color="#5a2a60"/><stop offset="1" stop-color="#0c060e"/></linearGradient>
<linearGradient id="gS" x1="0" x2="1"><stop offset="0" stop-color="#e82a2a"/><stop offset="0.17" stop-color="#f2e430"/><stop offset="0.35" stop-color="#3cc23c"/><stop offset="0.52" stop-color="#30c8e0"/><stop offset="0.68" stop-color="#3a4ec0"/><stop offset="0.84" stop-color="#e038b8"/><stop offset="1" stop-color="#e82a2a"/></linearGradient>
<linearGradient id="gSv" x1="0" x2="0" y1="0" y2="1"><stop offset="0" stop-color="#fff" stop-opacity="1"/><stop offset="0.2" stop-color="#fff" stop-opacity="0.6"/><stop offset="0.5" stop-color="#fff" stop-opacity="0"/><stop offset="0.5" stop-color="#000" stop-opacity="0"/><stop offset="1" stop-color="#000" stop-opacity="1"/></linearGradient>
<linearGradient id="gO" x1="0" x2="1"><stop offset="0" stop-color="#f0f0f0"/><stop offset="1" stop-color="#707070"/></linearGradient>
</defs>
<circle cx="840" cy="71" r="6.2" fill="none" stroke="#1a1a1a" stroke-width="3"/>
<circle cx="845" cy="78" r="6.5" fill="#9d4fa8" stroke="#2a2a2a" stroke-width="0.8"/>
<circle cx="834.5" cy="83.5" r="2.6" fill="#f4f4f4" stroke="#333" stroke-width="0.5"/><path d="M833 85 L836 82" stroke="#d03040" stroke-width="0.9"/>
<path d="M847.5 65.5 A4 4 0 0 1 852 69" fill="none" stroke="#aaa" stroke-width="0.5"/><path d="M851 68.5 L852 69.5 L853 68.3 M848.5 64.8 L847.3 65.5 L848.3 66.6" fill="none" stroke="#aaa" stroke-width="0.5"/>
<path d="M858 75 L863.5 69.5" stroke="#eee" stroke-width="1.1"/><circle cx="864.5" cy="68" r="2" fill="#e8967a"/>
<circle cx="871.5" cy="70" r="3.4" fill="#050505" stroke="#2a2a2a" stroke-width="0.4"/>
<rect x="902.5" y="70.5" width="5" height="4" rx="0.5" fill="#f0f0f0"/><path d="M903.5 70.5 V68.8 A1.5 1.5 0 0 1 906.5 68.8 V70.5" fill="none" stroke="#f0f0f0" stroke-width="0.7"/>
<rect x="915" y="69.5" width="49" height="10" rx="1" fill="#3c3c3c"/>
<path d="M958.5 72.7 L960 71.3 L961.5 72.7 M958.5 76.3 L960 77.7 L961.5 76.3" fill="none" stroke="#8a8a8a" stroke-width="0.5"/>
<rect x="838" y="93.8" width="106" height="3.6" rx="1.8" fill="url(#gC)"/>
<rect x="838" y="105" width="106" height="3.6" rx="1.8" fill="url(#gM)"/>
<rect x="838" y="116.2" width="106" height="3.6" rx="1.8" fill="url(#gY)"/>
<rect x="838" y="127.4" width="106" height="3.6" rx="1.8" fill="url(#gK)"/>
<circle cx="880.7" cy="95.6" r="2.5" fill="none" stroke="#e8e8e8" stroke-width="0.8"/>
<circle cx="914.5" cy="106.8" r="2.5" fill="none" stroke="#e8e8e8" stroke-width="0.8"/>
<circle cx="841" cy="118" r="2.5" fill="none" stroke="#e8e8e8" stroke-width="0.8"/>
<circle cx="851" cy="129.2" r="2.5" fill="none" stroke="#e8e8e8" stroke-width="0.8"/>
<rect x="947" y="91" width="19" height="9.5" fill="#282828"/>
<rect x="947" y="102.2" width="19" height="9.5" fill="#282828"/>
<rect x="947" y="113.4" width="19" height="9.5" fill="#282828"/>
<rect x="947" y="124.6" width="19" height="9.5" fill="#282828"/>
<rect x="832" y="138" width="134" height="12.5" fill="url(#gS)"/>
<rect x="832" y="138" width="134" height="12.5" fill="url(#gSv)"/>
<circle cx="835.5" cy="165.8" r="3" fill="#a552b0"/>
<rect x="843" y="164" width="80" height="3.6" rx="1.8" fill="url(#gO)"/>
<path d="M845 165.8 H921" stroke="#bdbdbd" stroke-width="1" stroke-dasharray="1 1"/>
<circle cx="926" cy="165.8" r="2.7" fill="#111" stroke="#eee" stroke-width="1"/>
<rect x="935" y="161" width="24" height="10" fill="#282828"/>
<rect x="959.5" y="161" width="7.5" height="10" fill="#2d2d2d"/>
<path d="M961.5 165 L963.2 166.7 L965 165" fill="none" stroke="#999" stroke-width="0.6"/>
</svg>
<div class="t" style="left:918px;top:71px;color:#d8d8d8;font-size:5.85px">CMYK</div>
<div class="t" style="left:832px;top:91px;color:#9a9a9a;font-size:5.8px">C</div>
<div class="t" style="left:831.5px;top:102px;color:#9a9a9a;font-size:5.8px">M</div>
<div class="t" style="left:832px;top:113px;color:#9a9a9a;font-size:5.8px">Y</div>
<div class="t" style="left:832px;top:124px;color:#9a9a9a;font-size:5.8px">K</div>
<div class="t" style="left:948.5px;top:92px;color:#e0e0e0;font-size:5.85px">40</div>
<div class="t" style="left:948.5px;top:103px;color:#e0e0e0;font-size:5.85px">74</div>
<div class="t" style="left:948.5px;top:114px;color:#e0e0e0;font-size:5.85px">0</div>
<div class="t" style="left:948.5px;top:125px;color:#e0e0e0;font-size:5.85px">10</div>
<div class="t" style="left:831px;top:152.5px;color:#9a9a9a;font-size:5.85px">Opacity</div>
<div class="t" style="left:936px;top:162px;color:#e0e0e0;font-size:5.85px">100 %</div>
<div style="left:827px;top:174px;width:143px;height:2px;background:#1e1e1e"></div>
<!-- LAYERS -->
<div style="left:827px;top:176px;width:143px;height:15px;background:#222222"></div>
<div style="left:827px;top:177px;width:9px;height:14px;background:#1e1e1e"></div>
<div style="left:831px;top:181px;width:1px;height:7px;background:#2e2e2e"></div>
<div style="left:837px;top:176px;width:24px;height:15px;background:#383838"></div>
<div class="t" style="left:840px;top:180.2px;color:#e6e6e6;font-size:5.8px">Layers</div>
<div class="t" style="left:864.5px;top:180.2px;color:#8e8e8e;font-size:5.8px">Character</div>
<div style="left:893px;top:178px;width:1px;height:13px;background:#242424"></div>
<div class="t" style="left:906px;top:180.2px;color:#8e8e8e;font-size:5.8px">Par</div>
<div style="left:926px;top:178px;width:1px;height:13px;background:#242424"></div>
<div class="t" style="left:938px;top:180.2px;color:#8e8e8e;font-size:5.8px">TSt</div>
<svg style="left:960px;top:180px" width="7" height="8" viewBox="0 0 7 8"><rect x="0" y="1" width="6" height="1" fill="#e0e0e0"/><rect x="0" y="3.3" width="6" height="1.6" fill="#8a8a8a"/><rect x="0" y="6" width="6" height="1" fill="#e0e0e0"/></svg>
<div class="t" style="left:830px;top:196px;color:#9a9a9a;font-size:5.85px">Opacity:</div>
<div style="left:854px;top:194px;width:19px;height:11px;background:#262626"></div>
<div class="t" style="left:854.5px;top:196px;color:#d8d8d8;font-size:5.85px">100 %</div>
<div style="left:873px;top:194px;width:7px;height:11px;background:#2c2c2c"></div>
<svg style="left:874px;top:198px" width="5" height="4" viewBox="0 0 5 4"><path d="M0.7 0.8 L2.5 2.8 L4.3 0.8" fill="none" stroke="#999" stroke-width="0.6"/></svg>
<div style="left:882px;top:194px;width:62px;height:11px;background:#3c3c3c;border-radius:1px"></div>
<div class="t" style="left:885px;top:196px;color:#c8c8c8;font-size:5.85px">Normal</div>
<svg style="left:937px;top:195px" width="5" height="9" viewBox="0 0 5 9"><path d="M1 3 L2.5 1.5 L4 3 M1 6 L2.5 7.5 L4 6" fill="none" stroke="#7a7a7a" stroke-width="0.5"/></svg>
<svg style="left:947px;top:195px" width="9" height="9" viewBox="0 0 9 9"><circle cx="4.5" cy="4.5" r="2.8" fill="none" stroke="#d8d8d8" stroke-width="1.6" stroke-dasharray="1.1 0.7"/><circle cx="4.5" cy="4.5" r="2" fill="none" stroke="#d8d8d8" stroke-width="0.8"/></svg>
<svg style="left:959px;top:194px" width="7" height="10" viewBox="0 0 7 10"><rect x="1" y="4.5" width="5" height="4.5" rx="0.5" fill="#e0e0e0"/><path d="M2 4.5 V3 A1.5 1.5 0 0 1 5 3 V4.5" fill="none" stroke="#e0e0e0" stroke-width="0.8"/></svg>
<div style="left:827px;top:208px;width:143px;height:1px;background:#222"></div>
<div style="left:827px;top:209px;width:143px;height:19px;background:#333333"></div>
<div style="left:827px;top:228px;width:143px;height:1px;background:#2a2a2a"></div>
<svg style="left:829px;top:215px" width="6" height="7" viewBox="0 0 6 7"><rect x="0.5" y="0.5" width="2" height="2" fill="#d8d8d8"/><rect x="0.5" y="4" width="2" height="2" fill="#d8d8d8"/><rect x="3.5" y="2" width="1.6" height="1.6" fill="#d8d8d8" opacity="0.7"/><rect x="3.5" y="5" width="1.6" height="1.6" fill="#d8d8d8" opacity="0.7"/></svg>
<div style="left:835px;top:209px;width:22px;height:19px;background:#303030"></div>
<div style="left:837px;top:211.5px;width:18px;height:15px;background:#a155ab;border-radius:3px"></div>
<div class="t" style="left:862px;top:214.5px;color:#5c5c5c;font-size:5.7px">Rounded Rectangle</div>
<div style="left:956.8px;top:216.8px;width:4px;height:4px;border-radius:50%;background:#bdbdbd"></div>
<div style="left:827px;top:229px;width:143px;height:19px;background:#333333"></div>
<div style="left:827px;top:248px;width:143px;height:1px;background:#2a2a2a"></div>
<svg style="left:829px;top:235px" width="6" height="7" viewBox="0 0 6 7"><rect x="0.5" y="0.5" width="2" height="2" fill="#d8d8d8"/><rect x="0.5" y="4" width="2" height="2" fill="#d8d8d8"/><rect x="3.5" y="2" width="1.6" height="1.6" fill="#d8d8d8" opacity="0.7"/><rect x="3.5" y="5" width="1.6" height="1.6" fill="#d8d8d8" opacity="0.7"/></svg>
<div style="left:835px;top:229px;width:22px;height:19px;background:#303030"></div>
<div style="left:837px;top:231.5px;width:18px;height:15px;background:#a155ab;border-radius:3px"></div>
<div class="t" style="left:862px;top:234.5px;color:#5c5c5c;font-size:5.7px">Rounded Rectangle</div>
<div style="left:956.8px;top:236.8px;width:4px;height:4px;border-radius:50%;background:#bdbdbd"></div>
<div style="left:827px;top:249px;width:143px;height:19px;background:#333333"></div>
<div style="left:827px;top:268px;width:143px;height:1px;background:#2a2a2a"></div>
<svg style="left:829px;top:255px" width="6" height="7" viewBox="0 0 6 7"><rect x="0.5" y="0.5" width="2" height="2" fill="#d8d8d8"/><rect x="0.5" y="4" width="2" height="2" fill="#d8d8d8"/><rect x="3.5" y="2" width="1.6" height="1.6" fill="#d8d8d8" opacity="0.7"/><rect x="3.5" y="5" width="1.6" height="1.6" fill="#d8d8d8" opacity="0.7"/></svg>
<div style="left:835px;top:249px;width:22px;height:19px;background:#303030"></div>
<div style="left:837px;top:251.5px;width:18px;height:15px;background:#a155ab;border-radius:3px"></div>
<div class="t" style="left:862px;top:254.5px;color:#5c5c5c;font-size:5.7px">Rounded Rectangle</div>
<div style="left:956.8px;top:256.8px;width:4px;height:4px;border-radius:50%;background:#bdbdbd"></div>
<div style="left:827px;top:269px;width:143px;height:19px;background:#2f76ad"></div>
<div style="left:827px;top:288px;width:143px;height:1px;background:#2a2a2a"></div>
<svg style="left:829px;top:275px" width="6" height="7" viewBox="0 0 6 7"><rect x="0.5" y="0.5" width="2" height="2" fill="#8fc0e0"/><rect x="0.5" y="4" width="2" height="2" fill="#8fc0e0"/><rect x="3.5" y="2" width="1.6" height="1.6" fill="#8fc0e0" opacity="0.7"/><rect x="3.5" y="5" width="1.6" height="1.6" fill="#8fc0e0" opacity="0.7"/></svg>
<div style="left:835px;top:269px;width:22px;height:19px;background:#2a6aa0"></div>
<div style="left:837px;top:271.5px;width:18px;height:15px;background:#6f8fd8;border-radius:3px"></div>
<div class="t" style="left:862px;top:274.5px;color:#5a9ccc;font-size:5.7px">Rounded Rectangle</div>
<div style="left:956.8px;top:276.8px;width:4px;height:4px;border-radius:50%;background:#7fb5dc"></div>
<div style="left:827px;top:289px;width:143px;height:19px;background:#333333"></div>
<div style="left:827px;top:308px;width:143px;height:1px;background:#2a2a2a"></div>
<svg style="left:829px;top:295px" width="6" height="7" viewBox="0 0 6 7"><rect x="0.5" y="0.5" width="2" height="2" fill="#d8d8d8"/><rect x="0.5" y="4" width="2" height="2" fill="#d8d8d8"/><rect x="3.5" y="2" width="1.6" height="1.6" fill="#d8d8d8" opacity="0.7"/><rect x="3.5" y="5" width="1.6" height="1.6" fill="#d8d8d8" opacity="0.7"/></svg>
<div style="left:835px;top:289px;width:22px;height:19px;background:#303030"></div>
<div style="left:837px;top:291.5px;width:18px;height:15px;background:#a155ab;border-radius:3px"></div>
<div class="t" style="left:862px;top:294.5px;color:#5c5c5c;font-size:5.7px">Rounded Rectangle</div>
<div style="left:956.8px;top:296.8px;width:4px;height:4px;border-radius:50%;background:#bdbdbd"></div>
<div style="left:827px;top:309px;width:143px;height:19px;background:#333333"></div>
<div style="left:827px;top:328px;width:143px;height:1px;background:#2a2a2a"></div>
<svg style="left:829px;top:315px" width="6" height="7" viewBox="0 0 6 7"><rect x="0.5" y="0.5" width="2" height="2" fill="#d8d8d8"/><rect x="0.5" y="4" width="2" height="2" fill="#d8d8d8"/><rect x="3.5" y="2" width="1.6" height="1.6" fill="#d8d8d8" opacity="0.7"/><rect x="3.5" y="5" width="1.6" height="1.6" fill="#d8d8d8" opacity="0.7"/></svg>
<div style="left:835px;top:309px;width:22px;height:19px;background:#2a2a2a"></div>
<svg style="left:841px;top:314px" width="10" height="9" viewBox="0 0 10 9"><rect x="0.5" y="0.5" width="9" height="8" rx="2" fill="#e8b0a0"/><rect x="1.5" y="1.5" width="7" height="6" rx="1.5" fill="#d06a40"/><rect x="2.3" y="2.5" width="5.4" height="4.2" rx="1" fill="#a050a8"/></svg>
<svg style="left:938.5px;top:314.5px" width="9" height="9" viewBox="0 0 9 9"><path d="M1.5 7.8 V3 Q1.5 1.2 3.2 1.2 H4 M0.4 3.3 H3" fill="none" stroke="#c8c8c8" stroke-width="0.8"/><path d="M3.8 2.8 L7.4 7.8 M7.4 2.8 L3.8 7.8" stroke="#c8c8c8" stroke-width="0.8"/></svg>
<div class="t" style="left:862px;top:314.5px;color:#5c5c5c;font-size:5.7px">Rounded Rectangle</div>
<div style="left:956.8px;top:316.8px;width:4px;height:4px;border-radius:50%;background:#bdbdbd"></div>
<div style="left:827px;top:329px;width:143px;height:19px;background:#333333"></div>
<div style="left:827px;top:348px;width:143px;height:1px;background:#2a2a2a"></div>
<svg style="left:829px;top:335px" width="6" height="7" viewBox="0 0 6 7"><rect x="0.5" y="0.5" width="2" height="2" fill="#d8d8d8"/><rect x="0.5" y="4" width="2" height="2" fill="#d8d8d8"/><rect x="3.5" y="2" width="1.6" height="1.6" fill="#d8d8d8" opacity="0.7"/><rect x="3.5" y="5" width="1.6" height="1.6" fill="#d8d8d8" opacity="0.7"/></svg>
<div style="left:835px;top:329px;width:22px;height:19px;background:#303030"></div>
<div style="left:837px;top:331.5px;width:18px;height:15px;background:#a155ab;border-radius:3px"></div>
<div class="t" style="left:862px;top:334.5px;color:#5c5c5c;font-size:5.7px">Rounded Rectangle</div>
<div style="left:956.8px;top:336.8px;width:4px;height:4px;border-radius:50%;background:#bdbdbd"></div>
<div style="left:827px;top:350px;width:143px;height:19px;background:#2e5382"></div>
<div style="left:827px;top:369px;width:143px;height:1px;background:#2a2a2a"></div>
<svg style="left:829px;top:356px" width="6" height="7" viewBox="0 0 6 7"><rect x="0.5" y="0.5" width="2" height="2" fill="#d8d8d8"/><rect x="0.5" y="4" width="2" height="2" fill="#d8d8d8"/><rect x="3.5" y="2" width="1.6" height="1.6" fill="#d8d8d8" opacity="0.7"/><rect x="3.5" y="5" width="1.6" height="1.6" fill="#d8d8d8" opacity="0.7"/></svg>
<div style="left:835px;top:350px;width:22px;height:19px;background:#283a55"></div>
<svg style="left:841px;top:355px" width="10" height="9" viewBox="0 0 10 9"><rect x="0.5" y="0.5" width="9" height="8" rx="2" fill="#e8b0a0"/><rect x="1.5" y="1.5" width="7" height="6" rx="1.5" fill="#d06a40"/><rect x="2.3" y="2.5" width="5.4" height="4.2" rx="1" fill="#a050a8"/></svg>
<svg style="left:938.5px;top:354.5px" width="9" height="9" viewBox="0 0 9 9"><path d="M1.5 7.8 V3 Q1.5 1.2 3.2 1.2 H4 M0.4 3.3 H3" fill="none" stroke="#c8c8c8" stroke-width="0.8"/><path d="M3.8 2.8 L7.4 7.8 M7.4 2.8 L3.8 7.8" stroke="#c8c8c8" stroke-width="0.8"/></svg>
<div class="t" style="left:862px;top:355.5px;color:#5a7eaa;font-size:5.7px">Rounded Rectangle</div>
<div style="left:956.8px;top:357.8px;width:4px;height:4px;border-radius:50%;background:#bdbdbd"></div>
<div style="left:827px;top:370px;width:143px;height:19px;background:#333333"></div>
<div style="left:827px;top:389px;width:143px;height:1px;background:#2a2a2a"></div>
<svg style="left:829px;top:376px" width="6" height="7" viewBox="0 0 6 7"><rect x="0.5" y="0.5" width="2" height="2" fill="#d8d8d8"/><rect x="0.5" y="4" width="2" height="2" fill="#d8d8d8"/><rect x="3.5" y="2" width="1.6" height="1.6" fill="#d8d8d8" opacity="0.7"/><rect x="3.5" y="5" width="1.6" height="1.6" fill="#d8d8d8" opacity="0.7"/></svg>
<div style="left:835px;top:370px;width:22px;height:19px;background:#303030"></div>
<div style="left:837px;top:372.5px;width:18px;height:15px;background:#a155ab;border-radius:3px"></div>
<div class="t" style="left:862px;top:375.5px;color:#5c5c5c;font-size:5.7px">Rounded Rectangle</div>
<div style="left:956.8px;top:377.8px;width:4px;height:4px;border-radius:50%;background:#bdbdbd"></div>
<div style="left:827px;top:390px;width:143px;height:19px;background:#333333"></div>
<div style="left:827px;top:409px;width:143px;height:1px;background:#2a2a2a"></div>
<svg style="left:829px;top:396px" width="6" height="7" viewBox="0 0 6 7"><rect x="0.5" y="0.5" width="2" height="2" fill="#d8d8d8"/><rect x="0.5" y="4" width="2" height="2" fill="#d8d8d8"/><rect x="3.5" y="2" width="1.6" height="1.6" fill="#d8d8d8" opacity="0.7"/><rect x="3.5" y="5" width="1.6" height="1.6" fill="#d8d8d8" opacity="0.7"/></svg>
<div style="left:835px;top:390px;width:22px;height:19px;background:#303030"></div>
<div style="left:837px;top:392.5px;width:18px;height:15px;background:#a155ab;border-radius:3px"></div>
<div class="t" style="left:862px;top:395.5px;color:#5c5c5c;font-size:5.7px">Rounded Rectangle</div>
<div style="left:956.8px;top:397.8px;width:4px;height:4px;border-radius:50%;background:#bdbdbd"></div>
<div style="left:827px;top:410px;width:143px;height:19px;background:#333333"></div>
<div style="left:827px;top:429px;width:143px;height:1px;background:#2a2a2a"></div>
<svg style="left:829px;top:416px" width="6" height="7" viewBox="0 0 6 7"><rect x="0.5" y="0.5" width="2" height="2" fill="#d8d8d8"/><rect x="0.5" y="4" width="2" height="2" fill="#d8d8d8"/><rect x="3.5" y="2" width="1.6" height="1.6" fill="#d8d8d8" opacity="0.7"/><rect x="3.5" y="5" width="1.6" height="1.6" fill="#d8d8d8" opacity="0.7"/></svg>
<div style="left:835px;top:410px;width:22px;height:19px;background:#303030"></div>
<div style="left:837px;top:412.5px;width:18px;height:15px;background:#a155ab;border-radius:3px"></div>
<div class="t" style="left:862px;top:415.5px;color:#5c5c5c;font-size:5.7px">Rounded Rectangle</div>
<div style="left:956.8px;top:417.8px;width:4px;height:4px;border-radius:50%;background:#bdbdbd"></div>
<div style="left:827px;top:430px;width:143px;height:19px;background:#333333"></div>
<div style="left:827px;top:449px;width:143px;height:1px;background:#2a2a2a"></div>
<svg style="left:829px;top:436px" width="6" height="7" viewBox="0 0 6 7"><rect x="0.5" y="0.5" width="2" height="2" fill="#d8d8d8"/><rect x="0.5" y="4" width="2" height="2" fill="#d8d8d8"/><rect x="3.5" y="2" width="1.6" height="1.6" fill="#d8d8d8" opacity="0.7"/><rect x="3.5" y="5" width="1.6" height="1.6" fill="#d8d8d8" opacity="0.7"/></svg>
<div style="left:835px;top:430px;width:22px;height:19px;background:#303030"></div>
<div style="left:837px;top:432.5px;width:18px;height:15px;background:#a155ab;border-radius:3px"></div>
<div class="t" style="left:862px;top:435.5px;color:#5c5c5c;font-size:5.7px">Rounded Rectangle</div>
<div style="left:956.8px;top:437.8px;width:4px;height:4px;border-radius:50%;background:#bdbdbd"></div>
<div style="left:827px;top:450px;width:143px;height:19px;background:#333333"></div>
<div style="left:827px;top:469px;width:143px;height:1px;background:#2a2a2a"></div>
<svg style="left:829px;top:456px" width="5" height="7" viewBox="0 0 5 7"><rect x="0.5" y="0.5" width="4" height="6" fill="none" stroke="#bbb" stroke-width="0.6"/><path d="M0.5 3.5 H4.5" stroke="#bbb" stroke-width="0.5"/></svg>
<div style="left:835px;top:450px;width:3px;height:20px;background:#36c78f"></div>
<div style="left:838px;top:450px;width:20px;height:19px;background:#2b2b2b"></div>
<div class="t" style="left:862px;top:455.5px;color:#5c5c5c;font-size:5.7px">Master A - Right</div>
<div style="left:956.8px;top:457.8px;width:4px;height:4px;border-radius:50%;background:#bdbdbd"></div>
<div style="left:827px;top:470px;width:143px;height:8px;background:#1f1f1f"></div>
<div style="left:827px;top:478px;width:143px;height:1px;background:#262626"></div>
<div style="left:827px;top:479px;width:143px;height:18px;background:#353535"></div>
<div style="left:830px;top:482px;width:10px;height:11px;background:#262626"></div>
<svg style="left:830px;top:483px" width="10" height="9" viewBox="0 0 10 9"><rect x="1.5" y="1" width="5" height="4" rx="1" fill="none" stroke="#ddd" stroke-width="0.8" transform="rotate(25 4 3)"/><rect x="3.5" y="3.5" width="5" height="4" rx="1" fill="none" stroke="#ddd" stroke-width="0.8" transform="rotate(25 6 5.5)"/></svg>
<svg style="left:871px;top:483px" width="10" height="10" viewBox="0 0 10 10"><rect x="0.5" y="0.5" width="9" height="9" fill="#d8d8d8"/><circle cx="5" cy="5" r="2.2" fill="#222"/></svg>
<svg style="left:883px;top:483px" width="10" height="10" viewBox="0 0 10 10"><circle cx="5" cy="5" r="4.2" fill="none" stroke="#cfcfcf" stroke-width="0.7"/><path d="M3 7 C4 5 5.5 3.5 7 3 C7 5 5.5 6.5 3 7 Z" fill="#dcdcdc"/></svg>
<svg style="left:895px;top:482px" width="9" height="11" viewBox="0 0 9 11"><path d="M0.5 1 H8.5 M0.5 10 H8.5" stroke="#9a9a9a" stroke-width="0.5"/><path d="M1.8 9 V4 Q1.8 2.2 3.6 2.2 H4.4 M0.8 4.3 H3.4" fill="none" stroke="#dadada" stroke-width="1"/><path d="M4.2 3.5 L8 9 M8 3.5 L4.2 9" stroke="#dadada" stroke-width="1"/></svg>
<svg style="left:946px;top:482px" width="9" height="11" viewBox="0 0 9 11"><path d="M1 2 H5 L7 4 V10 H1 Z" fill="none" stroke="#bbb" stroke-width="0.7"/><path d="M7 0.5 V3 M5.8 1.7 H8.3" stroke="#ddd" stroke-width="0.6"/><rect x="2.5" y="5" width="3" height="3.5" fill="none" stroke="#bbb" stroke-width="0.5"/></svg>
<svg style="left:958px;top:482px" width="9" height="11" viewBox="0 0 9 11"><path d="M1.5 3 H7.5 L7 10 H2 Z M1 2.2 H8 M3.5 1 H5.5" fill="none" stroke="#aaa" stroke-width="0.7"/></svg>
<div style="left:827px;top:497px;width:143px;height:1px;background:#1e1e1e"></div>
<div style="left:827px;top:498px;width:143px;height:15px;background:#222222"></div>
<div style="left:827px;top:499px;width:9px;height:14px;background:#1e1e1e"></div>
<div style="left:831px;top:503px;width:1px;height:7px;background:#2e2e2e"></div>
<div class="t" style="left:840.5px;top:502.2px;color:#8e8e8e;font-size:5.8px">Transform</div>
<div style="left:869px;top:500px;width:1px;height:13px;background:#242424"></div>
<div class="t" style="left:873px;top:502.2px;color:#8e8e8e;font-size:5.8px">Navigator</div>
<div style="left:902px;top:498px;width:25px;height:15px;background:#383838"></div>
<div class="t" style="left:905px;top:502.2px;color:#e6e6e6;font-size:5.8px">History</div>
<svg style="left:960px;top:502px" width="7" height="8" viewBox="0 0 7 8"><rect x="0" y="1" width="6" height="1" fill="#e0e0e0"/><rect x="0" y="3.3" width="6" height="1.6" fill="#8a8a8a"/><rect x="0" y="6" width="6" height="1" fill="#e0e0e0"/></svg>
<div class="t" style="left:831.5px;top:518.5px;color:#9a9a9a;font-size:5.85px">Position:</div>
<div style="left:861px;top:520.5px;width:97px;height:3.4px;background:#6a8cc0;border-radius:2px;box-shadow:0 0 0 0.6px #1d2a40"></div>
<div style="left:954.3px;top:518.5px;width:7px;height:7px;border-radius:50%;background:#f2f2f2"></div>
<div style="left:827px;top:529px;width:135px;height:65px;background:#1f1f1f"></div>
<div style="left:962px;top:529px;width:8px;height:65px;background:#2c2c2c"></div>
<div style="left:964px;top:583px;width:4px;height:9px;background:#555;border-radius:2px"></div>
<div style="left:827px;top:562px;width:135px;height:10.5px;background:#3a5a8c"></div>
<div class="t" style="left:830px;top:531px;color:#e8e8e8;font-size:5.6px">Set effect offset / angle</div>
<div class="t" style="left:830px;top:541.75px;color:#e8e8e8;font-size:5.6px">Set effect compression</div>
<div class="t" style="left:830px;top:552.5px;color:#e8e8e8;font-size:5.6px">Set effect radius</div>
<div class="t" style="left:830px;top:563.25px;color:#e8e8e8;font-size:5.6px">Add all filter effects</div>
<div class="t" style="left:830px;top:574px;color:#e8e8e8;font-size:5.6px">Move</div>
<div class="t" style="left:830px;top:584.75px;color:#e8e8e8;font-size:5.6px">Add all filter effects</div>
<!-- /LAYERS -->
<!-- /RIGHTITEMS -->

<!-- STATUS -->
<!-- STATUSITEMS -->
<div style="left:168px;top:587px;width:651px;height:8px;background:#2a2a2a"></div>
<div style="left:359px;top:589.5px;width:269px;height:4px;background:#5a5a5a;border-radius:1px"></div>
<div style="left:0;top:595px;width:970px;height:11px;background:#2c2c2c"></div>
<div style="left:25px;top:595px;width:53px;height:11px;background:#232323"></div>
<svg style="left:0;top:595px" width="130" height="11" viewBox="0 595 130 11">
<path d="M6 597.5 V602.5 M11 597.5 L7.5 600 L11 602.5 Z" fill="#4a4a4a" stroke="#4a4a4a" stroke-width="0.6"/>
<path d="M19.5 597.5 L16 600 L19.5 602.5 Z" fill="#4a4a4a"/>
<path d="M79.5 597.3 L84 600 L79.5 602.7 Z" fill="#e8e8e8"/>
<path d="M88.5 597.3 L92.5 600 L88.5 602.7 Z M93.5 597.3 V602.7" fill="#e8e8e8" stroke="#e8e8e8" stroke-width="0.8"/>
<path d="M99.5 597 H104.5 V603.5 H99.5 Z" fill="none" stroke="#bdbdbd" stroke-width="0.7"/><path d="M100.5 597.5 H103.5 V599.5 H100.5 Z" fill="#9a9a9a"/>
<rect x="113.5" y="596.8" width="6" height="7" fill="#2aa070" stroke="#53c68f" stroke-width="0.5"/><path d="M115 599 H118 M115 600.7 H118 M115 602.4 H118" stroke="#b0f0d0" stroke-width="0.5"/>
</svg>
<div class="t" style="left:44px;top:596px;color:#e0e0e0;font-size:5.85px">1 of 3</div>
<div class="t" style="left:127px;top:596.5px;color:#b0b0b0;font-size:5.93px">'Rounded Rectangle' selected. <b style="color:#f0f0f0">Drag</b> to move selection. <b style="color:#f0f0f0">Click</b> another object to select it. <b style="color:#f0f0f0">Click</b> on an empty area to deselect selection.</div>
<svg style="left:937px;top:279px" width="10" height="17" viewBox="0 0 10 17"><path d="M1.5 2 V4.5 M2.2 2.2 L4.5 4.5 M4.5 2.2 L2.2 4.5" stroke="#7fb8e0" stroke-width="0.5" opacity="0.6"/><path d="M3 6 V14 L4.8 12.3 L6.2 15.2 L7.4 14.6 L6.1 11.8 H8.4 Z" fill="#111" stroke="#eee" stroke-width="0.7"/></svg>
<!-- /STATUSITEMS -->

</body></html>
